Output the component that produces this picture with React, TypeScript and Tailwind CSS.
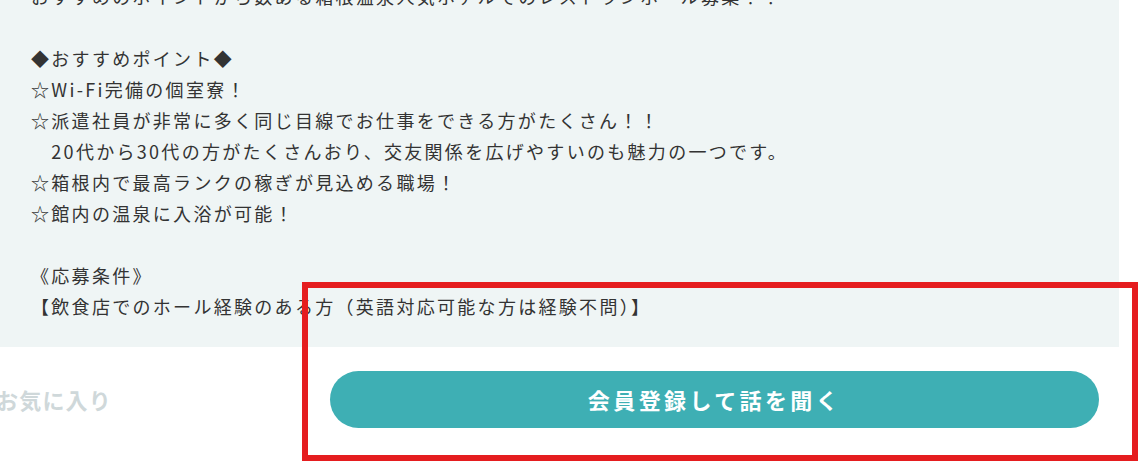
import React from 'react';

const lines: string[] = [
  'おすすめのポイントから数ある箱根温泉人気ホテルでのレストランホール募集！！',
  '',
  '◆おすすめポイント◆',
  '☆Wi-Fi完備の個室寮！',
  '☆派遣社員が非常に多く同じ目線でお仕事をできる方がたくさん！！',
  '　20代から30代の方がたくさんおり、交友関係を広げやすいのも魅力の一つです。',
  '☆箱根内で最高ランクの稼ぎが見込める職場！',
  '☆館内の温泉に入浴が可能！',
  '',
  '《応募条件》',
  '【飲食店でのホール経験のある方（英語対応可能な方は経験不問）】',
];

export default function App() {
  return (
    <div
      className="relative w-[1140px] h-[461px] overflow-hidden bg-white"
      style={{ fontFamily: '"Noto Sans CJK JP", "Noto Sans", sans-serif' }}
    >
      {/* job description body */}
      <div className="w-[1119px] bg-[#eff5f5] -mt-[19px] pl-[31px] pb-[25px]">
        {lines.map((t, i) => (
          <p key={i} className="h-[31px] leading-[31px] text-[18px] tracking-[2.3px] text-[#333333] whitespace-pre">
            {t}
          </p>
        ))}
      </div>

      {/* action row */}
      <div className="flex items-center h-[105px]">
        <span className="w-[330px] -ml-[4px] text-[22px] font-bold tracking-[1.2px] text-[#cfd8da]">
          お気に入り
        </span>
        <button
          type="button"
          className="w-[769px] h-[57px] ml-[4px] rounded-full bg-[#3eafb4] text-white text-[22px] font-bold tracking-[3.4px]"
        >
          会員登録して話を聞く
        </button>
      </div>

      {/* highlight frame */}
      <div className="absolute left-[302px] top-[282px] w-[836px] h-[179px] border-[6px] border-[#e51d1f]" />
    </div>
  );
}
